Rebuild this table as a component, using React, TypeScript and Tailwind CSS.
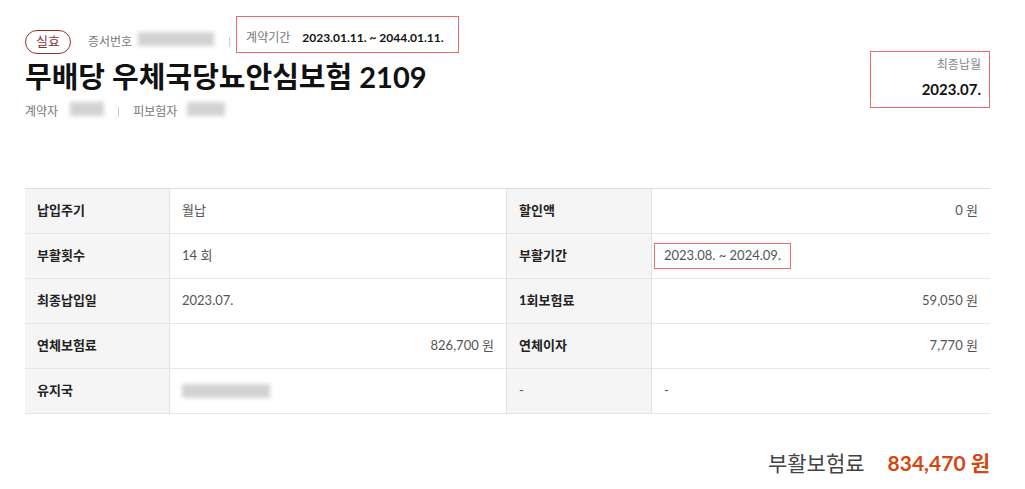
const font = "font-['Lato','Noto_Sans_CJK_KR',sans-serif]";

type Cell = { label: string; value: React.ReactNode; align?: "left" | "right"; plain?: boolean };

function Blur({ w }: { w: string }) {
  return <span className={`inline-block h-[14px] ${w} bg-[#c8c8c8] blur-[2px] opacity-80`} />;
}

const rows: [Cell, Cell][] = [
  [
    { label: "납입주기", value: "월납" },
    { label: "할인액", value: "0 원", align: "right" },
  ],
  [
    { label: "부활횟수", value: "14 회" },
    {
      label: "부활기간",
      value: (
        <span className="-ml-[10px] inline-block border-[1.5px] border-[#f06a6a] px-[9px] py-[2px]">
          2023.08. ~ 2024.09.
        </span>
      ),
    },
  ],
  [
    { label: "최종납입일", value: "2023.07." },
    { label: "1회보험료", value: "59,050 원", align: "right" },
  ],
  [
    { label: "연체보험료", value: "826,700 원", align: "right" },
    { label: "연체이자", value: "7,770 원", align: "right" },
  ],
  [
    { label: "유지국", value: <Blur w="w-[88px]" /> },
    { label: "-", value: "-", plain: true },
  ],
];

export default function App() {
  return (
    <div className={`${font} w-[1025px] h-[489px] bg-white text-[#222] pl-[25px] pr-[35px]`}>
      <div className="flex justify-between">
        <div>
          <div className="flex items-center h-[37px] mt-[16px] text-[12px]">
            <span className="flex items-center justify-center h-[24px] px-[10px] mt-[14px] text-[13px] rounded-full border-[1.5px] border-[#8a3535] text-[#8a3535]">
              실효
            </span>
            <div className="flex items-center mt-[14px]">
              <span className="ml-[17px] text-[#777]">증서번호</span>
              <span className="ml-[6px]"><Blur w="w-[76px]" /></span>
              <span className="ml-[15px] h-[10px] w-px bg-[#ccc]" />
            </div>
            <div className="ml-[6px] flex items-center h-[37px] border-[1.5px] border-[#f06a6a] pl-[9px] pr-[14px] pt-[6px]">
              <span className="text-[#777] text-[12px]">계약기간</span>
              <span className="ml-[12px] font-bold text-[12px] text-[#111]">2023.01.11. ~ 2044.01.11.</span>
            </div>
          </div>
          <h1 className="mt-[5px] text-[29px] leading-[38px] font-bold text-[#111]">무배당 우체국당뇨안심보험 2109</h1>
          <div className="mt-[6px] flex items-center text-[12px] text-[#777]">
            <span>계약자</span>
            <span className="ml-[12px]"><Blur w="w-[34px]" /></span>
            <span className="ml-[14px] h-[10px] w-px bg-[#ccc]" />
            <span className="ml-[14px]">피보험자</span>
            <span className="ml-[10px]"><Blur w="w-[38px]" /></span>
          </div>
        </div>
        <div className="mt-[51px] h-[57px] w-[120px] border-[1.5px] border-[#f06a6a] flex flex-col items-end pr-[8px] pt-[4px]">
          <span className="text-[12px] text-[#888]">최종납월</span>
          <span className="mt-[4px] text-[15px] font-bold text-[#111]">2023.07.</span>
        </div>
      </div>

      <div className="mt-[67px] w-[965px] border-t border-[#dedede] text-[13px]">
        {rows.map((row, i) => (
          <div key={i} className="grid grid-cols-[145px_337px_145px_338px] h-[45px] border-b border-[#e6e6e6]">
            {row.map((c, j) => (
              <div key={j} className="contents">
                <div
                  className={`flex items-center bg-[#f5f5f5] border-r border-[#e2e2e2] pl-[12px] ${
                    c.plain ? "text-[#555]" : "font-bold text-[#222]"
                  }`}
                >
                  {c.label}
                </div>
                <div
                  className={`flex items-center px-[12px] text-[#555] ${
                    c.align === "right" ? "justify-end" : ""
                  } ${j === 0 ? "border-r border-[#e2e2e2]" : ""}`}
                >
                  {c.value}
                </div>
              </div>
            ))}
          </div>
        ))}
      </div>

      <div className="mt-[33px] w-[965px] flex justify-end items-baseline">
        <span className="text-[21px] text-[#444]">부활보험료</span>
        <span className="ml-[23px] text-[21px] font-bold text-[#d4480f]">834,470 원</span>
      </div>
    </div>
  );
}
